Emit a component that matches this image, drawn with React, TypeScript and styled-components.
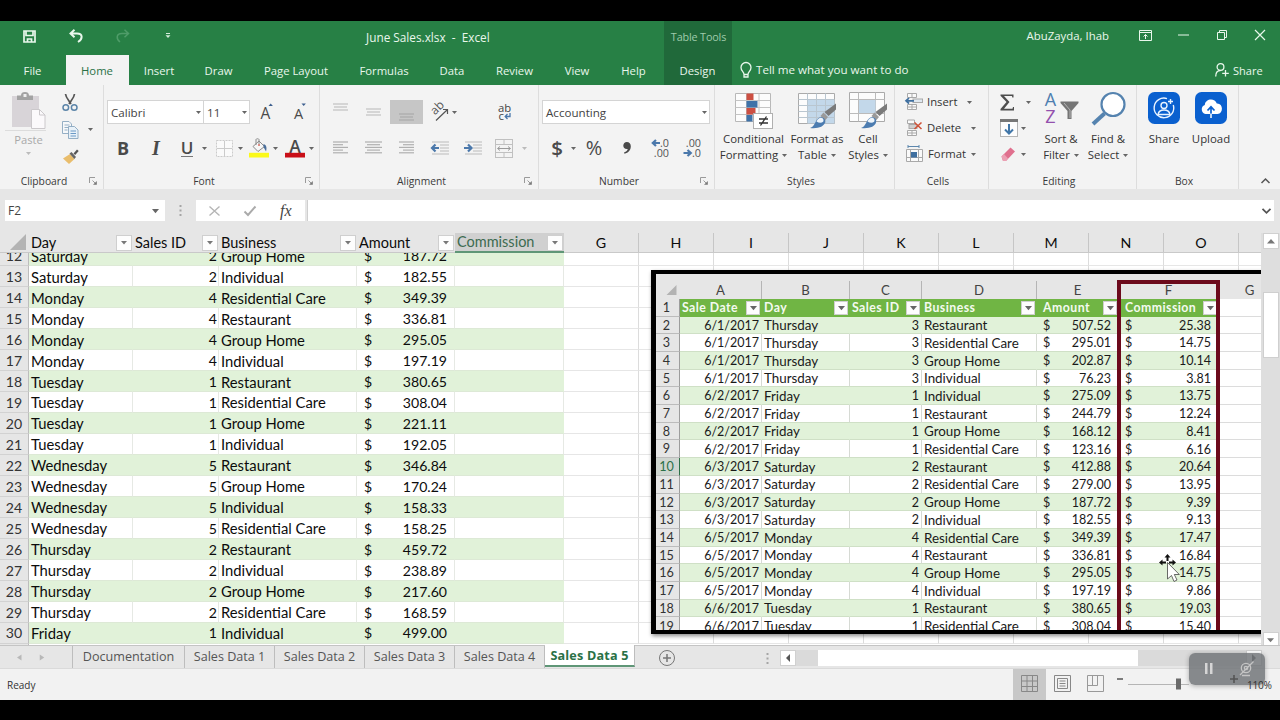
import React from 'react';
import styled, { createGlobalStyle, css } from 'styled-components';

const ui = `"Open Sans", "Noto Sans", sans-serif`;
const sheetFont = `Lato, "Open Sans", sans-serif`;

const Global = createGlobalStyle`
  * { box-sizing: border-box; }
  html, body { margin: 0; padding: 0; background: #000; overflow: hidden; }
  body { font-family: ${ui}; color: #262626; }
  svg { display: block; flex: none; overflow: visible; }
`;

/* ---------- window frame ---------- */
const Screen = styled.div`
  width: 1280px;
  height: 720px;
  padding: 21px 0 20px;
  background: #000;
  display: flex;
  flex-direction: column;
  overflow: hidden;
  white-space: nowrap;
  line-height: 1;
`;

const TitleBar = styled.header`
  height: 34px;
  flex: none;
  display: flex;
  background: #278045;
  color: #e9f7ec;
  font-size: 11.8px;
`;
const QuickAccess = styled.div`
  display: flex;
  align-items: center;
  width: 300px;
  padding: 0 0 4px 23px;
`;
const QuickIcon = styled.div<{ $w: number }>`
  width: ${p => p.$w}px;
`;
const DocTitle = styled.div`
  width: 364px;
  padding: 11px 0 0 66px;
  white-space: pre;
`;
const ContextTitle = styled.div`
  width: 68px;
  padding: 11px 0 0 1px;
  background: #20693a;
  color: #9fcbab;
  font-size: 10.8px;
  letter-spacing: -0.15px;
  text-align: center;
`;
const UserName = styled.div`
  width: 401px;
  padding: 9px 24px 0 0;
  text-align: right;
  font-size: 11.4px;
`;
const WindowIcons = styled.div`
  flex: 1;
  display: flex;
  align-items: center;
  padding: 0 0 6px 6px;
`;
const WindowIcon = styled.div<{ $w: number }>`
  width: ${p => p.$w}px;
`;

const TabBar = styled.nav`
  height: 30px;
  flex: none;
  display: flex;
  background: #278045;
  color: #e9f7ec;
  font-size: 11.3px;
`;
const RibbonTab = styled.div<{ $w: number; $kind?: 'active' | 'context' }>`
  width: ${p => p.$w}px;
  display: flex;
  align-items: center;
  justify-content: center;
  padding: 1px 1px 0 0;
  ${p => p.$kind === 'active' && css`background: #f3f3f3; color: #2a7146;`}
  ${p => p.$kind === 'context' && css`background: #20693a; margin-left: 2px;`}
`;
const TellMe = styled.div`
  display: flex;
  align-items: center;
  gap: 4px;
  width: 483px;
  padding-left: 8px;
  font-size: 11.6px;
`;
const ShareLink = styled.div`
  display: flex;
  align-items: center;
  gap: 4px;
  font-size: 11px;
`;

/* ---------- ribbon ---------- */
const Ribbon = styled.section`
  height: 104px;
  flex: none;
  display: flex;
  background: #f3f3f3;
`;
const Group = styled.div<{ $w: number }>`
  width: ${p => p.$w}px;
  flex: none;
  display: flex;
  flex-direction: column;
  border-right: 1px solid #dddddd;
`;
const GroupBody = styled.div<{ $row?: boolean }>`
  height: 89px;
  display: flex;
  flex-direction: ${p => (p.$row ? 'row' : 'column')};
`;
const GroupFooter = styled.div`
  height: 16px;
  display: flex;
  justify-content: flex-end;
  align-items: center;
  padding-right: 6px;
`;
const GroupName = styled.span`
  flex: 1;
  text-align: center;
  font-size: 10.3px;
  color: #3a3a3a;
  padding-right: 1px;
`;
const ToolRow = styled.div<{ $top: number; $left?: number }>`
  height: 24px;
  margin-top: ${p => p.$top}px;
  padding-left: ${p => p.$left ?? 0}px;
  display: flex;
  align-items: center;
`;
const Tool = styled.div<{ $w: number; $gap?: number; $on?: boolean }>`
  width: ${p => p.$w}px;
  height: 24px;
  flex: none;
  margin-left: ${p => p.$gap ?? 0}px;
  display: flex;
  align-items: center;
  justify-content: center;
  background: ${p => (p.$on ? '#c6c6c6' : 'transparent')};
`;
const Letter = styled.span<{ $size: number; $weight?: number; $italic?: boolean; $underline?: boolean }>`
  font-size: ${p => p.$size}px;
  font-weight: ${p => p.$weight ?? 400};
  color: #4a4a4a;
  ${p => p.$italic && css`font-family: "Liberation Serif", serif; font-style: italic;`}
  ${p => p.$underline && css`border-bottom: 1px solid #777; line-height: 15px; padding-bottom: 1px;`}
`;
const Combo = styled.div<{ $w: number }>`
  width: ${p => p.$w}px;
  height: 24px;
  flex: none;
  background: #fff;
  border: 1px solid #d4d4d4;
  margin-right: -1px;
  display: flex;
  align-items: center;
  justify-content: space-between;
  padding: 1px 2px 0 3px;
  font-size: 11.6px;
  color: #444;
`;
const PasteButton = styled.div`
  width: 57px;
  display: flex;
  flex-direction: column;
  align-items: center;
  padding-top: 7px;
  font-size: 11.2px;
  color: #a9a9a9;
  gap: 3px;
`;
const PasteCaret = styled.div`
  padding-top: 4px;
`;
const ClipTools = styled.div`
  display: flex;
  flex-direction: column;
  padding: 4px 0 0 5px;
`;
const ClipTool = styled.div`
  display: flex;
  align-items: center;
  gap: 9px;
  height: 27px;
`;
const BigButton = styled.div<{ $w: number }>`
  width: ${p => p.$w}px;
  flex: none;
  display: flex;
  flex-direction: column;
  align-items: center;
  padding-top: 7px;
  font-size: 11.4px;
  color: #333;
`;
const BigIcon = styled.div`
  height: 39px;
`;
const ButtonLine = styled.div`
  height: 16px;
  display: flex;
  align-items: center;
  gap: 4px;
`;
const SmallButton = styled.div<{ $gap: number }>`
  height: 26px;
  display: flex;
  align-items: center;
  gap: ${p => p.$gap}px;
  font-size: 11.3px;
  color: #333;
`;
const SmallLabel = styled.span<{ $pull: number }>`
  margin-left: -${p => p.$pull}px;
`;
const SmallStack = styled.div<{ $left: number; $top: number; $w?: number }>`
  padding: ${p => p.$top}px 0 0 ${p => p.$left}px;
  width: ${p => (p.$w ? p.$w + 'px' : 'auto')};
  flex: none;
`;
const RibbonEnd = styled.div`
  flex: 1;
  display: flex;
  align-items: flex-end;
  justify-content: center;
  padding: 0 0 5px 11px;
`;

/* ---------- formula bar ---------- */
const FormulaBar = styled.section`
  height: 44px;
  flex: none;
  display: flex;
  padding: 11px 6px 0 5px;
  background: #e6e6e6;
  align-items: flex-start;
`;
const NameBox = styled.div`
  width: 160px;
  height: 21px;
  background: #fff;
  display: flex;
  align-items: center;
  justify-content: space-between;
  padding: 1px 6px 0 3px;
  font-size: 12px;
  color: #444;
`;
const BarDots = styled.div`
  width: 31px;
  height: 21px;
  display: flex;
  align-items: center;
  justify-content: center;
`;
const FormulaTools = styled.div`
  width: 109px;
  height: 21px;
  background: #fff;
  display: flex;
  align-items: center;
  gap: 24px;
  padding-left: 13px;
`;
const FxLabel = styled.span`
  font: italic 16px "Liberation Serif", serif;
  color: #444;
`;
const FormulaInput = styled.div`
  flex: 1;
  height: 21px;
  margin-left: 2px;
  background: #fff;
  border-left: 1px solid #cfcfcf;
  display: flex;
  align-items: center;
  justify-content: flex-end;
  padding-right: 3px;
`;

/* ---------- worksheet ---------- */
const Workspace = styled.main`
  height: 412px;
  flex: none;
  display: flex;
  background: #fff;
`;
const Sheet = styled.div`
  position: relative;
  width: 1261px;
  height: 412px;
  overflow: hidden;
  font-family: ${sheetFont};
  font-size: 14.8px;
  color: #0c0c0c;
`;
const HeaderRow = styled.div`
  display: flex;
  height: 20px;
  background: #e6e6e6;
  border-bottom: 1px solid #c9c9c9;
`;
const Corner = styled.div<{ $w: number; $pad: string }>`
  width: ${p => p.$w}px;
  flex: none;
  padding: ${p => p.$pad};
  display: flex;
  align-items: flex-end;
  justify-content: flex-end;
`;
const FieldHeader = styled.div<{ $w: number; $selected?: boolean }>`
  width: ${p => p.$w}px;
  flex: none;
  display: flex;
  align-items: center;
  justify-content: space-between;
  padding: 1px 1px 0 2px;
  font-size: 14.5px;
  ${p => p.$selected && css`background: #d0d0d0; color: #3d6b50; border-bottom: 2px solid #5f9677; margin-bottom: -1px;`}
`;
const LetterHeader = styled.div<{ $w: number }>`
  width: ${p => p.$w}px;
  flex: none;
  display: flex;
  align-items: center;
  justify-content: center;
  padding-top: 1px;
  border-right: 1px solid #c6c6c6;
  font-size: 14.2px;
`;
const FilterButton = styled.div<{ $size: number }>`
  width: ${p => p.$size}px;
  height: ${p => p.$size}px;
  flex: none;
  background: #fdfdfd;
  border: 1px solid #cfcfcf;
  display: flex;
  align-items: center;
  justify-content: center;
`;
const Rows = styled.div`
  height: 392px;
  overflow: hidden;
`;
const RowStack = styled.div`
  margin-top: -7.9px;
`;
const Row = styled.div`
  display: flex;
  height: 20.97px;
`;
const RowNumber = styled.div`
  width: 29px;
  flex: none;
  background: #e6e6e6;
  border-right: 1px solid #bdbdbd;
  border-bottom: 1px solid #d2d2d2;
  display: flex;
  align-items: center;
  justify-content: center;
  padding-top: 2px;
  font-size: 14.1px;
  color: #333;
`;
const Cell = styled.div<{ $w: number; $band?: boolean; $right?: boolean; $money?: boolean }>`
  width: ${p => p.$w}px;
  flex: none;
  display: flex;
  align-items: center;
  justify-content: ${p => (p.$money ? 'space-between' : p.$right ? 'flex-end' : 'flex-start')};
  padding: ${p => (p.$money ? '2px 7px 0' : p.$right ? '2px 1px 0 2px' : '2px 2px 0')};
  font-size: ${p => (p.$money || p.$right ? 14.1 : 14.8)}px;
  background: ${p => (p.$band ? '#e1f2d9' : '#fff')};
  border-right: 1px solid ${p => (p.$band ? '#e1f2d9' : '#e6e9e4')};
  border-bottom: 1px solid #dde9d6;
`;
const BlankCell = styled.div<{ $w: number }>`
  width: ${p => p.$w}px;
  flex: none;
  border-right: 1px solid #dcdcdc;
  border-bottom: 1px solid #e6e6e6;
`;

/* ---------- picture pasted over the sheet ---------- */
const Picture = styled.div`
  position: absolute;
  left: 651px;
  top: 37px;
  width: 620px;
  height: 364px;
  border: 4px solid #000;
  border-left-width: 5px;
  box-shadow: 1px 2px 4px rgba(0, 0, 0, 0.45);
  background: #fff;
  overflow: hidden;
  font-size: 13.4px;
  color: #1a1a1a;
`;
const PicHeader = styled.div`
  display: flex;
  height: 24.8px;
  background: #e6e6e6;
  font-size: 13.2px;
  color: #444;
`;
const PicLetter = styled.div<{ $w: number }>`
  width: ${p => p.$w}px;
  flex: none;
  margin-top: 7px;
  padding-top: 1px;
  display: flex;
  align-items: center;
  justify-content: center;
  border-right: 1px solid #b5b5b5;
`;
const PicRow = styled.div`
  display: flex;
  height: 17.71px;
`;
const PicNumber = styled.div<{ $on?: boolean }>`
  width: 24px;
  flex: none;
  background: ${p => (p.$on ? '#cfd6d0' : '#e6e6e6')};
  color: ${p => (p.$on ? '#2c7048' : '#333')};
  border-right: 1px solid ${p => (p.$on ? '#2c7048' : '#9d9d9d')};
  border-bottom: 1px solid #bcbcbc;
  display: flex;
  align-items: center;
  justify-content: center;
  padding: 2px 2px 0 0;
  font-size: 12.6px;
`;
const PicField = styled.div<{ $w: number; $indent: number }>`
  width: ${p => p.$w}px;
  flex: none;
  background: #70b544;
  color: #f4faf0;
  font-weight: 700;
  font-size: 12.3px;
  letter-spacing: 0.45px;
  display: flex;
  align-items: center;
  justify-content: space-between;
  padding: 0 2px 0 ${p => p.$indent}px;
`;
const PicCell = styled.div<{ $w: number; $band?: boolean; $right?: boolean; $money?: boolean }>`
  width: ${p => p.$w}px;
  flex: none;
  display: flex;
  align-items: center;
  justify-content: ${p => (p.$money ? 'space-between' : p.$right ? 'flex-end' : 'flex-start')};
  padding: ${p => (p.$money ? '2px 7px 0 6px' : '2px 2px 0')};
  font-size: ${p => (p.$money || p.$right ? 12.5 : 13.4)}px;
  background: ${p => (p.$band ? '#e1f2d9' : '#fff')};
  border-right: 1px solid ${p => (p.$band ? '#e1f2d9' : '#d6dad4')};
  border-bottom: 1px solid #cfe0c6;
`;
const PicBlank = styled.div`
  width: 60px;
  flex: none;
  border-bottom: 1px solid #dcdcdc;
`;
const RedFrame = styled.div`
  position: absolute;
  left: 461px;
  top: 6px;
  width: 103px;
  height: 360px;
  border: 4px solid #6c0a1c;
`;
const Pointer = styled.div`
  position: absolute;
  left: 1159px;
  top: 321px;
`;

const VScroll = styled.div`
  flex: 1;
  display: flex;
  flex-direction: column;
  align-items: center;
  background: #dedede;
`;
const ScrollButton = styled.div`
  width: 16px;
  height: 16px;
  flex: none;
  background: #fff;
  border: 1px solid #d0d0d0;
  display: flex;
  align-items: center;
  justify-content: center;
`;
const VThumb = styled.div`
  width: 16px;
  height: 66px;
  margin: 43px 0 274px;
  flex: none;
  background: #fff;
  border: 1px solid #cfcfcf;
`;

/* ---------- sheet tabs and status ---------- */
const SheetBar = styled.footer`
  height: 24px;
  flex: none;
  display: flex;
  background: #e6e6e6;
  border-top: 1px solid #c4c4c4;
  border-bottom: 1px solid #dadada;
  font-size: 12.6px;
  color: #555;
`;
const TabArrows = styled.div`
  width: 73px;
  display: flex;
  align-items: center;
  padding-left: 17px;
  gap: 16px;
  border-right: 1px solid #bdbdbd;
`;
const SheetTab = styled.div<{ $w: number; $active?: boolean }>`
  width: ${p => p.$w}px;
  height: 22px;
  flex: none;
  display: flex;
  align-items: center;
  justify-content: center;
  border-right: 1px solid #bdbdbd;
  padding-top: 1px;
  ${p => p.$active && css`
    background: #fff;
    color: #2a7146;
    font-weight: 700;
    letter-spacing: 0.2px;
    border-bottom: 2px solid #5f9677;
    padding-top: 2px;
    margin-top: -1px;
  `}
`;
const AddSheet = styled.div`
  width: 120px;
  padding: 4px 0 0 24px;
`;
const TabSplitter = styled.div`
  width: 25px;
  padding: 6px 0 0 11px;
`;
const HScroll = styled.div`
  width: 482px;
  height: 16px;
  margin: 4px 0 0 0;
  display: flex;
  background: #dadada;
`;
const HThumb = styled.div`
  width: 320px;
  margin: 0 108px 0 22px;
  flex: none;
  background: #fff;
`;
const StatusBar = styled.div`
  position: relative;
  height: 31px;
  flex: none;
  display: flex;
  background: #f2f2f2;
  font-size: 10px;
  color: #333;
`;
const StatusText = styled.div`
  width: 1013px;
  padding: 11px 0 0 7px;
`;
const ViewButton = styled.div<{ $on?: boolean }>`
  width: 33px;
  height: 31px;
  padding-bottom: 2px;
  display: flex;
  align-items: center;
  justify-content: center;
  background: ${p => (p.$on ? '#c8c8c8' : 'transparent')};
`;
const Zoom = styled.div`
  position: relative;
  z-index: 1;
  margin-left: 5px;
  padding-top: 7px;
  width: 130px;
`;
const ZoomValue = styled.div`
  position: relative;
  z-index: 1;
  padding-top: 11px;
  font-size: 10.2px;
  letter-spacing: -0.3px;
`;
const RecorderPill = styled.div`
  position: absolute;
  left: 1189px;
  top: -16px;
  width: 76px;
  height: 32px;
  border-radius: 6px;
  background: rgba(112, 115, 119, 0.83);
  box-shadow: 0 1px 5px rgba(0, 0, 0, 0.3);
  display: flex;
  align-items: center;
  gap: 25px;
  padding-left: 15px;
`;

/* ---------- icons ---------- */
const Caret = ({ c = '#666', s = 5 }: { c?: string; s?: number }) => (
  <svg width={s} height={s * 0.6} viewBox="0 0 10 6"><path d="M0 0h10L5 6z" fill={c} /></svg>
);
const Tri = ({ d, c = '#555', w = 8, h = 8 }: { d: string; c?: string; w?: number; h?: number }) => (
  <svg width={w} height={h} viewBox="0 0 8 8"><path d={d} fill={c} /></svg>
);
const Launcher = () => (
  <svg width="8" height="8" viewBox="0 0 8 8" fill="none" stroke="#9a9a9a">
    <path d="M.5 6V.5H6M3.500 3.500l3 3" /><path d="M7.800 4v3.800H4z" fill="#777" stroke="none" />
  </svg>
);
const Dots = () => (
  <svg width="3" height="13" viewBox="0 0 3 13" fill="#a5a5a5">
    <rect x=".5" y="1" width="2" height="2" /><rect x=".5" y="5.5" width="2" height="2" /><rect x=".5" y="10" width="2" height="2" />
  </svg>
);
const Lines = ({ dx, n = 5, c = '#b0b0b0' }: { dx: number[][]; n?: number; c?: string }) => (
  <svg width="17" height={n * 2.7} viewBox={`0 0 17 ${n * 2.7}`} stroke={c} strokeWidth="1.2">
    {Array.from({ length: n }, (_, i) => {
      const [a, b] = dx[i % dx.length];
      return <path key={i} d={`M${a} ${i * 2.7 + 1}H${b}`} />;
    })}
  </svg>
);
const IndentIcon = ({ flip }: { flip?: boolean }) => (
  <svg width="18" height="14" viewBox="0 0 18 14" fill="none">
    <path d="M1 1h17M9 4h9M9 7h9M9 10h9M1 13h17" stroke="#bcbcbc" strokeWidth="1.2" />
    <path d={flip ? 'M0 7h7M4 3.5 7.5 7 4 10.5' : 'M8 7H1.5M4.5 3.5 1 7l3.5 3.5'} stroke="#4b78ab" strokeWidth="2.2" />
  </svg>
);
const PasteIcon = () => (
  <svg width="35" height="39" viewBox="0 0 35 39">
    <rect x="1" y="4" width="27" height="31" fill="#d8d4d8" />
    <path d="M6 8V3.5h4C10 1 11.500 0 14 0s4 1 4 3.500h4V8z" fill="#a3a3a3" />
    <rect x="12.500" y="2" width="3" height="3" fill="#efefef" />
    <path d="M20.500 17.500h8l5.500 5.500v13.500H20.500z" fill="#fbf9fb" stroke="#cbc8cb" />
    <path d="M28.500 17.500V23H34" fill="none" stroke="#cbc8cb" />
    <path d="M-6 38.500H35" stroke="#dcdcdc" />
  </svg>
);
const CutIcon = () => (
  <svg width="16" height="18" viewBox="0 0 16 18" fill="none">
    <path d="M3.500 0c.5 4 3 6 5.500 10M12.500 0c-.5 4-3 6-5.500 10" stroke="#555" strokeWidth="1.700" />
    <circle cx="3.800" cy="13.500" r="2.800" stroke="#5b84a8" strokeWidth="1.500" />
    <circle cx="12.200" cy="13.500" r="2.800" stroke="#5b84a8" strokeWidth="1.500" />
  </svg>
);
const CopyIcon = () => (
  <svg width="17" height="18" viewBox="0 0 17 18" stroke="#8aa7bf" strokeWidth=".9">
    <path d="M.5.5H7L9.500 3v9.500h-9z" fill="#f6f8fa" />
    <path d="M2.500 4h5M2.500 6.500h5M2.500 9h3" />
    <path d="M6.500 5.500h6l3.500 3.500v8.500H6.500z" fill="#e8f1f8" />
    <path d="M8.500 10h5.500M8.500 12.500h5.500M8.500 15h5.500" stroke="#5b8fc0" />
  </svg>
);
const BrushIcon = () => (
  <svg width="17" height="16" viewBox="0 0 17 16">
    <path d="M1 9.500 8 5l4.500 5L7 15z" fill="#e9bd6c" />
    <path d="M7.500 4.500 9.500 3l4.500 5-1.700 2z" fill="#666" />
    <path d="M11.500 4.500 15 .5l1.700 1.500-3.500 4z" fill="#555" />
  </svg>
);
const BordersIcon = () => (
  <svg width="17" height="17" viewBox="0 0 17 17" fill="#fafafa" stroke="#cbcbcb">
    <rect x=".5" y=".5" width="16" height="16" strokeDasharray="2 1" /><path d="M8.500 1v15M1 8.500h15" />
  </svg>
);
const FillIcon = () => (
  <svg width="20" height="20" viewBox="0 0 20 20" fill="none">
    <path d="M4 8.500 10 3l5.500 5.500-6.500 5z" fill="#f7f7f7" stroke="#8a8a8a" />
    <path d="M7 7V1.500c0-1 3-1 3 0V6" stroke="#8a8a8a" />
    <circle cx="10" cy="7" r="1" fill="#d46a5f" />
    <path d="M14.500 6c3 1 3.500 3.500 2.500 7.500L14.500 9z" fill="#4b6f9b" />
    <rect y="14.800" width="20" height="4.700" fill="#fbf91a" />
  </svg>
);
const FontColorIcon = () => (
  <svg width="20" height="20" viewBox="0 0 20 20">
    <text x="10" y="14.500" fontSize="17.500" fontWeight="600" fontFamily={ui} textAnchor="middle" fill="#4a4a4a">A</text>
    <rect y="14.800" width="20" height="4.700" fill="#c90f18" />
  </svg>
);
const SizeA = ({ up }: { up?: boolean }) => (
  <svg width="15" height="20" viewBox="0 0 15 20">
    <text x="5.500" y="16.500" fontSize={up ? 15.5 : 14.500} fontFamily={ui} textAnchor="middle" fill="#4a4a4a">A</text>
    <path d={up ? 'M8.500 4 10.700 1.500l2.200 2.500z' : 'M8.500 1.500h4.400l-2.200 2.500z'} fill="#3d5f8f" />
  </svg>
);
const OrientationIcon = () => (
  <svg width="20" height="20" viewBox="0 0 20 20" fill="none">
    <text transform="translate(5 13.500) rotate(-45)" fontSize="12" fontFamily={ui} fill="#555">ab</text>
    <path d="M6 18.500 17 8M13 7.500h4.500V12" stroke="#555" strokeWidth="1.200" />
  </svg>
);
const WrapIcon = () => (
  <svg width="16" height="20" viewBox="0 0 16 20" fill="none">
    <text x="1" y="9.500" fontSize="11.300" fontFamily={ui} fill="#444">ab</text>
    <text x="1.500" y="18" fontSize="11.300" fontFamily={ui} fill="#444">c</text>
    <path d="M13 11v3.500H8.500M10.500 12l-2.300 2.500L10.500 17" stroke="#4b78ab" strokeWidth="1.300" />
  </svg>
);
const MergeIcon = () => (
  <svg width="18" height="19" viewBox="0 0 18 19" fill="none" stroke="#c0c0c0">
    <rect x=".5" y=".5" width="17" height="18" /><path d="M.5 5.500h17M.5 13.500h17M9 .5v5M9 13.500v5" />
    <path d="M3 9.500h12M5 7.500l-2.500 2L5 11.500M13 7.500l2.500 2-2.500 2" stroke="#9a9a9a" />
  </svg>
);
const DecimalIcon = ({ dec }: { dec?: boolean }) => (
  <svg width="18" height="20" viewBox="0 0 18 20" fontFamily={ui} fontSize="10.800" fill="#555">
    <text x="17" y="9" textAnchor="end">{dec ? '.00' : '.0'}</text>
    <text x="17" y="19" textAnchor="end">{dec ? '.0' : '.00'}</text>
    <path d={dec ? 'M-.5 15h7M3.500 12l3.300 3-3.300 3' : 'M8 5H1M4 2 .8 5 4 8'} fill="none" stroke="#4b78ab" strokeWidth="2.200" />
  </svg>
);
const CommaIcon = () => (
  <svg width="8" height="12" viewBox="0 0 8 12">
    <path d="M3.800 0C6.300 0 7.800 1.700 7.800 4.200 7.800 8 5.500 10.700 1.500 11.800L1 10.500C3.300 9.600 4.600 8.300 4.700 7 2 7.400.3 6 .3 3.600.3 1.500 1.800 0 3.800 0z" fill="#4a4a4a" />
  </svg>
);
const Brush = () => (
  <>
    <path d="M38 11.500V17.500L30.500 24l-4-4z" fill="#7a7a7a" />
    <path d="m25.500 20.500 4.500 4.500-3 3.500-4.500-4.500z" fill="#9a9a9a" />
    <path d="M12 36c5-1 5-8.500 9.500-10.500 3.500-1 6.500 1.500 5.500 5-1 4-7 6.500-15 5.500z" fill="#4c7cb0" />
    <path d="M18.500 29.500c2-5 6.500-4.500 7-1.500s-4 3.500-7 1.500z" fill="#eef5fb" />
  </>
);
const CondIcon = () => (
  <svg width="38" height="38" viewBox="0 0 38 38">
    <path d="M.5 1.500h35v28H.5z" fill="#fcfcfc" stroke="#b8b8b8" />
    <path d="M.5 8.500h35M.5 15.500h35M.5 22.500h35M11.500 1.500v28M24 1.500v28" stroke="#c4c4c4" />
    <path d="M11.500 1.500h7V8h-7zM11.500 16h9v6.500h-9z" fill="#cc4f42" />
    <path d="M11.500 9h11v6.500h-11zM11.500 23h6v6.500h-6z" fill="#3f72a8" />
    <rect x="18.500" y="21.500" width="19" height="15" fill="#fff" stroke="#b0b0b0" />
    <path d="M24 27h9M24 31h9M31.500 24.500l-6 9" stroke="#333" strokeWidth="1.300" />
  </svg>
);
const TableIcon = () => (
  <svg width="39" height="38" viewBox="0 0 39 38">
    <path d="M.5 1.500h36v30H.5z" fill="#fcfcfc" stroke="#aaa" />
    <path d="M10 8h26.500v23.500H10z" fill="#c3d8ea" />
    <path d="M.5 7.500h36M.5 13.500h36M.5 19.500h36M.5 25.500h36M9.500 1.500v30M18.500 1.500v30M27.500 1.500v30" stroke="#b9c6d0" />
    <Brush />
  </svg>
);
const CellIcon = () => (
  <svg width="38" height="38" viewBox="0 0 38 38">
    <path d="M.5.500h35v29H.5z" fill="#fcfcfc" stroke="#aaa" />
    <path d="M.5 7.500h35M.5 21.500h35M9.500.500v29M26.500.500v29" stroke="#bbb" />
    <path d="M10 8h16.500v13H10z" fill="#c3d8ea" />
    <Brush />
  </svg>
);
const InsertIcon = () => (
  <svg width="18" height="18" viewBox="0 0 18 18" fill="#fafafa" stroke="#a9a9a9">
    <path d="M2.500.500h9v4h-9zM2.500 11.500h9v5h-9zM7 .5v4M7 11.500v5M2.500 14h9" />
    <rect x="8" y="6" width="9.500" height="3.500" fill="#dfe8f0" />
    <path d="M9 7.800H1M4 5 1 7.800l3 2.700" fill="none" stroke="#3f6f9f" strokeWidth="1.700" />
  </svg>
);
const DeleteIcon = () => (
  <svg width="18" height="18" viewBox="0 0 18 18" fill="#fafafa" stroke="#a9a9a9">
    <path d="M2.500 1h7v3.500h-7zM2.500 11.500h9v5h-9zM7 11.500v5M2.500 14h9" />
    <rect x="4" y="5.500" width="8" height="4" fill="#cfcfcf" />
    <path d="m9.500 3.500 7 6.500M16.500 3.500l-7 6.500" stroke="#cf5238" strokeWidth="1.600" />
  </svg>
);
const FormatIcon = () => (
  <svg width="18" height="18" viewBox="0 0 18 18" fill="none" stroke="#a9a9a9">
    <path d="M1.500 4.500h16v12h-16zM1.500 12.500h16M5.500 4.500v12M13.500 4.500v12" fill="#fafafa" />
    <rect x="6" y="7" width="6" height="5.500" fill="#3f6f9f" stroke="none" />
    <path d="M3 1.500h11M3 0v3M14 0v3" stroke="#5d87ad" />
  </svg>
);
const SumIcon = () => (
  <svg width="15" height="17" viewBox="0 0 15 17"><path d="M.5.500h13v3h-1.200L12 2H4l5.500 6L4 14.800h8.500l.5-1.800H14v3.500H.5V15l6-7L.5 1.800z" fill="#4d4d4d" /></svg>
);
const FillDownIcon = () => (
  <svg width="18" height="18" viewBox="0 0 18 18">
    <rect x=".5" y=".5" width="17" height="17" fill="#fdfdfd" stroke="#b5b5b5" /><rect width="18" height="3" fill="#777" />
    <path d="M9 5v9.500M5 10.500l4 4 4-4" fill="none" stroke="#4176a8" strokeWidth="2" />
  </svg>
);
const EraserIcon = () => (
  <svg width="16" height="15" viewBox="0 0 16 15">
    <path d="M1.500 9.500 10.500.500l4.500 4-9 9.500H3z" fill="#e0708e" /><path d="M1.500 9.500 4 7l4 4.500-2 2.500H3z" fill="#eba0b3" />
  </svg>
);
const SortIcon = () => (
  <svg width="35" height="34" viewBox="0 0 35 34">
    <text x="6.500" y="14" fontSize="18" fontFamily={ui} textAnchor="middle" fill="#4e7eb0">A</text>
    <text x="6.500" y="31" fontSize="18" fontFamily={ui} textAnchor="middle" fill="#9350ad">Z</text>
    <path d="M16.500 9.500h18v1.500l-7 8V27h-4v-8l-7-8z" fill="#757575" />
    <path d="m20 11 6 7V26" fill="none" stroke="#b5b5b5" />
  </svg>
);
const FindIcon = () => (
  <svg width="35" height="34" viewBox="0 0 35 34" fill="none">
    <circle cx="22" cy="12.500" r="11.500" fill="#fff" stroke="#5583af" strokeWidth="2.200" />
    <path d="M13.500 21.500 2 32" stroke="#5583af" strokeWidth="4" />
  </svg>
);
const BoxShareIcon = () => (
  <svg width="32" height="32" viewBox="0 0 32 32" fill="none" stroke="#e9f3ff" strokeWidth="1.400">
    <rect width="32" height="32" rx="6.500" fill="#0a60cf" stroke="none" />
    <path d="M19 6.600A9.800 9.800 0 1 0 25.300 13" /><circle cx="16" cy="13.500" r="3" />
    <path d="M10 22.500c1-6 11-6 12 0zM22.500 7v5M20 9.500h5" />
  </svg>
);
const BoxUploadIcon = () => (
  <svg width="32" height="32" viewBox="0 0 32 32">
    <rect width="32" height="32" rx="6.500" fill="#0a60cf" />
    <path d="M10.500 22A4.700 4.700 0 0 1 9.800 13c.5-6.500 10-7.500 12-1.500 6.500-.5 7 10 .7 10.500z" fill="#fff" />
    <path d="M16 22V15M12.500 18.500 16 14.800l3.500 3.700" fill="none" stroke="#0a60cf" strokeWidth="1.700" />
    <path d="M16 21.500V26" stroke="#fff" strokeWidth="1.500" />
  </svg>
);

/* ---------- data ---------- */
const tabs: [string, number, ('active' | 'context')?][] = [
  ['File', 66], ['Home', 63, 'active'], ['Insert', 61], ['Draw', 58], ['Page Layout', 97], ['Formulas', 79],
  ['Data', 57], ['Review', 68], ['View', 57], ['Help', 56], ['Design', 68, 'context'],
];
const mainRows: [number, string, number, string, string][] = [
  [12, 'Saturday', 2, 'Group Home', '187.72'], [13, 'Saturday', 2, 'Individual', '182.55'],
  [14, 'Monday', 4, 'Residential Care', '349.39'], [15, 'Monday', 4, 'Restaurant', '336.81'],
  [16, 'Monday', 4, 'Group Home', '295.05'], [17, 'Monday', 4, 'Individual', '197.19'],
  [18, 'Tuesday', 1, 'Restaurant', '380.65'], [19, 'Tuesday', 1, 'Residential Care', '308.04'],
  [20, 'Tuesday', 1, 'Group Home', '221.11'], [21, 'Tuesday', 1, 'Individual', '192.05'],
  [22, 'Wednesday', 5, 'Restaurant', '346.84'], [23, 'Wednesday', 5, 'Group Home', '170.24'],
  [24, 'Wednesday', 5, 'Individual', '158.33'], [25, 'Wednesday', 5, 'Residential Care', '158.25'],
  [26, 'Thursday', 2, 'Restaurant', '459.72'], [27, 'Thursday', 2, 'Individual', '238.89'],
  [28, 'Thursday', 2, 'Group Home', '217.60'], [29, 'Thursday', 2, 'Residential Care', '168.59'],
  [30, 'Friday', 1, 'Individual', '499.00'],
];
const picRows: [string, string, number, string, string, string][] = [
  ['6/1/2017', 'Thursday', 3, 'Restaurant', '507.52', '25.38'],
  ['6/1/2017', 'Thursday', 3, 'Residential Care', '295.01', '14.75'],
  ['6/1/2017', 'Thursday', 3, 'Group Home', '202.87', '10.14'],
  ['6/1/2017', 'Thursday', 3, 'Individual', '76.23', '3.81'],
  ['6/2/2017', 'Friday', 1, 'Individual', '275.09', '13.75'],
  ['6/2/2017', 'Friday', 1, 'Restaurant', '244.79', '12.24'],
  ['6/2/2017', 'Friday', 1, 'Group Home', '168.12', '8.41'],
  ['6/2/2017', 'Friday', 1, 'Residential Care', '123.16', '6.16'],
  ['6/3/2017', 'Saturday', 2, 'Restaurant', '412.88', '20.64'],
  ['6/3/2017', 'Saturday', 2, 'Residential Care', '279.00', '13.95'],
  ['6/3/2017', 'Saturday', 2, 'Group Home', '187.72', '9.39'],
  ['6/3/2017', 'Saturday', 2, 'Individual', '182.55', '9.13'],
  ['6/5/2017', 'Monday', 4, 'Residential Care', '349.39', '17.47'],
  ['6/5/2017', 'Monday', 4, 'Restaurant', '336.81', '16.84'],
  ['6/5/2017', 'Monday', 4, 'Group Home', '295.05', '14.75'],
  ['6/5/2017', 'Monday', 4, 'Individual', '197.19', '9.86'],
  ['6/6/2017', 'Tuesday', 1, 'Restaurant', '380.65', '19.03'],
  ['6/6/2017', 'Tuesday', 1, 'Residential Care', '308.04', '15.40'],
];
const fields: [string, number][] = [['Day', 104], ['Sales ID', 86], ['Business', 138], ['Amount', 98], ['Commission', 109]];
const letters = ['G', 'H', 'I', 'J', 'K', 'L', 'M', 'N', 'O'];
const picCols: [string, string, number, number][] = [
  ['A', 'Sale Date', 82, 2], ['B', 'Day', 88, 2], ['C', 'Sales ID', 72, 2],
  ['D', 'Business', 115, 2], ['E', 'Amount', 82, 6], ['F', 'Commission', 100, 6],
];

const GroupEnd = ({ name, launcher = true }: { name: string; launcher?: boolean }) => (
  <GroupFooter><GroupName>{name}</GroupName>{launcher && <Launcher />}</GroupFooter>
);

const RibbonPanel = () => (
  <Ribbon>
    <Group $w={104}>
      <GroupBody $row>
        <PasteButton><PasteIcon /><span>Paste</span><PasteCaret><Caret c="#bbb" /></PasteCaret></PasteButton>
        <ClipTools>
          <ClipTool><CutIcon /></ClipTool>
          <ClipTool><CopyIcon /><Caret /></ClipTool>
          <ClipTool><BrushIcon /></ClipTool>
        </ClipTools>
      </GroupBody>
      <GroupEnd name="Clipboard" />
    </Group>

    <Group $w={216}>
      <GroupBody>
        <ToolRow $top={15} $left={3}>
          <Combo $w={97}>Calibri<Caret /></Combo>
          <Combo $w={47}>11<Caret /></Combo>
          <Tool $w={33} $gap={2}><SizeA up /></Tool>
          <Tool $w={33}><SizeA /></Tool>
        </ToolRow>
        <ToolRow $top={12} $left={3}>
          <Tool $w={32}><Letter $size={18} $weight={700}>B</Letter></Tool>
          <Tool $w={34}><Letter $size={20} $weight={700} $italic>I</Letter></Tool>
          <Tool $w={28}><Letter $size={17} $weight={600} $underline>U</Letter></Tool>
          <Tool $w={7}><Caret /></Tool>
          <Tool $w={24} $gap={4}><BordersIcon /></Tool>
          <Tool $w={8}><Caret /></Tool>
          <Tool $w={24} $gap={3}><FillIcon /></Tool>
          <Tool $w={8}><Caret /></Tool>
          <Tool $w={24} $gap={4}><FontColorIcon /></Tool>
          <Tool $w={8}><Caret /></Tool>
        </ToolRow>
      </GroupBody>
      <GroupEnd name="Font" />
    </Group>

    <Group $w={219}>
      <GroupBody>
        <ToolRow $top={15} $left={4}>
          <Tool $w={33}><svg width="17" height="18" viewBox="0 0 17 18" stroke="#b8b8b8" strokeWidth="1.2"><path d="M1 1h15M2 4h13M1 7h15" /></svg></Tool>
          <Tool $w={33}><svg width="17" height="18" viewBox="0 0 17 18" stroke="#b8b8b8" strokeWidth="1.2"><path d="M1 6h15M2 9h13M1 12h15" /></svg></Tool>
          <Tool $w={33} $on><svg width="17" height="18" viewBox="0 0 17 18" stroke="#a4a4a4" strokeWidth="1.2"><path d="M1 11h15M2 14h13M1 17h15" /></svg></Tool>
          <Tool $w={22} $gap={6}><OrientationIcon /></Tool>
          <Tool $w={7}><Caret /></Tool>
          <Tool $w={22} $gap={36}><WrapIcon /></Tool>
        </ToolRow>
        <ToolRow $top={12} $left={4}>
          <Tool $w={33}><Lines dx={[[1, 16], [1, 11]]} /></Tool>
          <Tool $w={33}><Lines dx={[[0, 17], [2, 15]]} /></Tool>
          <Tool $w={33}><Lines dx={[[1, 16], [5, 16]]} /></Tool>
          <Tool $w={33}><IndentIcon /></Tool>
          <Tool $w={33}><IndentIcon flip /></Tool>
          <Tool $w={29}><MergeIcon /></Tool>
          <Tool $w={7} $gap={3}><Caret c="#bbb" /></Tool>
        </ToolRow>
      </GroupBody>
      <GroupEnd name="Alignment" />
    </Group>

    <Group $w={176}>
      <GroupBody>
        <ToolRow $top={15} $left={3}><Combo $w={168}>Accounting<Caret /></Combo></ToolRow>
        <ToolRow $top={12} $left={5}>
          <Tool $w={26}><Letter $size={20.5} $weight={600}>$</Letter></Tool>
          <Tool $w={7}><Caret /></Tool>
          <Tool $w={28} $gap={3}><Letter $size={20}>%</Letter></Tool>
          <Tool $w={32} $gap={3}><CommaIcon /></Tool>
          <Tool $w={32} $gap={2}><DecimalIcon /></Tool>
          <Tool $w={32}><DecimalIcon dec /></Tool>
        </ToolRow>
      </GroupBody>
      <GroupEnd name="Number" />
    </Group>

    <Group $w={180}>
      <GroupBody $row>
        <BigButton $w={77}>
          <BigIcon><CondIcon /></BigIcon>
          <ButtonLine>Conditional</ButtonLine><ButtonLine>Formatting<Caret /></ButtonLine>
        </BigButton>
        <BigButton $w={50}>
          <BigIcon><TableIcon /></BigIcon>
          <ButtonLine>Format as</ButtonLine><ButtonLine>Table<Caret /></ButtonLine>
        </BigButton>
        <BigButton $w={52}>
          <BigIcon><CellIcon /></BigIcon>
          <ButtonLine>Cell</ButtonLine><ButtonLine>Styles<Caret /></ButtonLine>
        </BigButton>
      </GroupBody>
      <GroupEnd name="Styles" launcher={false} />
    </Group>

    <Group $w={94}>
      <GroupBody>
        <SmallStack $left={10} $top={4}>
          <SmallButton $gap={10}><InsertIcon /><SmallLabel $pull={6}>Insert</SmallLabel><Caret /></SmallButton>
          <SmallButton $gap={10}><DeleteIcon /><SmallLabel $pull={6}>Delete</SmallLabel><Caret /></SmallButton>
          <SmallButton $gap={5}><FormatIcon /><SmallLabel $pull={0}>Format</SmallLabel><Caret /></SmallButton>
        </SmallStack>
      </GroupBody>
      <GroupEnd name="Cells" launcher={false} />
    </Group>

    <Group $w={148}>
      <GroupBody $row>
        <SmallStack $left={11} $top={4} $w={47}>
          <SmallButton $gap={11}><SumIcon /><Caret /></SmallButton>
          <SmallButton $gap={3}><FillDownIcon /><Caret /></SmallButton>
          <SmallButton $gap={5}><EraserIcon /><Caret /></SmallButton>
        </SmallStack>
        <BigButton $w={50}>
          <BigIcon><SortIcon /></BigIcon>
          <ButtonLine>Sort &amp;</ButtonLine><ButtonLine>Filter<Caret /></ButtonLine>
        </BigButton>
        <BigButton $w={44}>
          <BigIcon><FindIcon /></BigIcon>
          <ButtonLine>Find &amp;</ButtonLine><ButtonLine>Select<Caret /></ButtonLine>
        </BigButton>
      </GroupBody>
      <GroupEnd name="Editing" launcher={false} />
    </Group>

    <Group $w={102}>
      <GroupBody $row>
        <BigButton $w={54}><BigIcon><BoxShareIcon /></BigIcon><ButtonLine>Share</ButtonLine></BigButton>
        <BigButton $w={40}><BigIcon><BoxUploadIcon /></BigIcon><ButtonLine>Upload</ButtonLine></BigButton>
      </GroupBody>
      <GroupEnd name="Box" launcher={false} />
    </Group>
    <RibbonEnd>
      <svg width="9" height="6" viewBox="0 0 9 6" fill="none" stroke="#555" strokeWidth="1.500"><path d="M.5 5 4.500 1l4 4" /></svg>
    </RibbonEnd>
  </Ribbon>
);

const PastedPicture = () => (
  <Picture>
    <PicHeader>
      <Corner $w={24} $pad="0 3px 4px 0"><Tri d="M8 0v8H0z" c="#b3b3b3" w={11} h={10} /></Corner>
      {picCols.map(([l, , w]) => <PicLetter key={l} $w={w}>{l}</PicLetter>)}
      <PicLetter $w={62}>G</PicLetter>
    </PicHeader>
    <PicRow>
      <PicNumber>1</PicNumber>
      {picCols.map(([l, n, w, indent]) => (
        <PicField key={l} $w={w} $indent={indent}>
          <span>{n}</span><FilterButton $size={14}><Caret c="#666" s={7} /></FilterButton>
        </PicField>
      ))}
      <PicBlank />
    </PicRow>
    {picRows.map(([date, day, id, biz, amt, com], i) => {
      const band = i % 2 === 0;
      return (
        <PicRow key={i}>
          <PicNumber $on={i === 8}>{i + 2}</PicNumber>
          <PicCell $w={82} $band={band} $right>{date}</PicCell>
          <PicCell $w={88} $band={band}>{day}</PicCell>
          <PicCell $w={72} $band={band} $right>{id}</PicCell>
          <PicCell $w={115} $band={band}>{biz}</PicCell>
          <PicCell $w={82} $band={band} $money><span>$</span><span>{amt}</span></PicCell>
          <PicCell $w={100} $band={band} $money><span>$</span><span>{com}</span></PicCell>
          <PicBlank />
        </PicRow>
      );
    })}
    <RedFrame />
  </Picture>
);

const App = () => (
  <>
    <Global />
    <Screen>
      <TitleBar>
        <QuickAccess>
          <QuickIcon $w={46}>
            <svg width="13" height="13" viewBox="0 0 13 13" fill="none" stroke="#e9f7ec" strokeWidth="1.700"><path d="M1 1h11v11H1zM3 1v4.500h7V1M4.500 12V9h4v3" /></svg>
          </QuickIcon>
          <QuickIcon $w={47}>
            <svg width="14" height="14" viewBox="0 0 14 14" fill="none" stroke="#e9f7ec" strokeWidth="2"><path d="M5.500.8 1.500 4.500l4 3.700M2 4.500h6c6 0 6 5.500 1 8.500" /></svg>
          </QuickIcon>
          <QuickIcon $w={49}>
            <svg width="14" height="14" viewBox="0 0 14 14" fill="none" stroke="#4f9c69" strokeWidth="1.500"><path d="M8.500.8l4 3.700-4 3.700M12 4.500H6C0 4.500 0 10 4 13" /></svg>
          </QuickIcon>
          <svg width="6" height="6" viewBox="0 0 6 6" fill="#d5ecdb"><path d="M1 0h4v1H1zM.5 2.200h5L3 5z" /></svg>
        </QuickAccess>
        <DocTitle>June Sales.xlsx  -  Excel</DocTitle>
        <ContextTitle>Table Tools</ContextTitle>
        <UserName>AbuZayda, Ihab</UserName>
        <WindowIcons>
          <WindowIcon $w={39}><svg width="13" height="11" viewBox="0 0 13 11" fill="none" stroke="#e9f7ec"><path d="M.5.500h12v10H.5zM.5 2.500h12M6.500 9V4.500M4.500 6.500l2-2 2 2" /></svg></WindowIcon>
          <WindowIcon $w={39}><svg width="11" height="2" viewBox="0 0 11 2"><path d="M0 1h11" stroke="#e9f7ec" /></svg></WindowIcon>
          <WindowIcon $w={38}><svg width="10" height="10" viewBox="0 0 10 10" fill="none" stroke="#e9f7ec"><path d="M.5 2.500h7v7h-7zM2.500 2.500v-2h7v7h-2" /></svg></WindowIcon>
          <svg width="10" height="10" viewBox="0 0 10 10" stroke="#e9f7ec" strokeWidth="1.200"><path d="m0 0 10 10M10 0 0 10" /></svg>
        </WindowIcons>
      </TitleBar>
      <TabBar>
        {tabs.map(([n, w, k]) => <RibbonTab key={n} $w={w} $kind={k}>{n}</RibbonTab>)}
        <TellMe>
          <svg width="12" height="17" viewBox="0 0 12 17" fill="none" stroke="#e9f7ec" strokeWidth="1.300"><path d="M4 12.500c0-3-3-3.500-3-7a5 5 0 0 1 10 0c0 3.500-3 4-3 7zM4 12.500V15h4v-2.500" /></svg>
          Tell me what you want to do
        </TellMe>
        <ShareLink>
          <svg width="14" height="14" viewBox="0 0 14 14" fill="none" stroke="#e9f7ec" strokeWidth="1.300"><circle cx="5.500" cy="4" r="3.400" /><path d="M.7 13.500c0-4 2-6 4.800-6M10.500 7v6.500M7.200 10.300h6.600" /></svg>
          Share
        </ShareLink>
      </TabBar>
      <RibbonPanel />
      <FormulaBar>
        <NameBox>F2<Caret s={7} /></NameBox>
        <BarDots><Dots /></BarDots>
        <FormulaTools>
          <svg width="11" height="10" viewBox="0 0 11 10" stroke="#b5b5b5" strokeWidth="1.400"><path d="m.5.500 10 9M10.500.500l-10 9" /></svg>
          <svg width="12" height="10" viewBox="0 0 12 10" fill="none" stroke="#aaa" strokeWidth="1.900"><path d="m.5 5.500 3.500 3.500L11.500.500" /></svg>
          <FxLabel>fx</FxLabel>
        </FormulaTools>
        <FormulaInput>
          <svg width="9" height="6" viewBox="0 0 9 6" fill="none" stroke="#555" strokeWidth="1.800"><path d="M.5.800 4.500 4.800l4-4" /></svg>
        </FormulaInput>
      </FormulaBar>

      <Workspace>
        <Sheet>
          <HeaderRow>
            <Corner $w={29} $pad="0 3px 2px 0"><Tri d="M8 0v8H0z" c="#b3b3b3" w={16} h={16} /></Corner>
            {fields.map(([n, w]) => (
              <FieldHeader key={n} $w={w} $selected={n === 'Commission'}>
                <span>{n}</span><FilterButton $size={16}><Caret c="#777" s={6} /></FilterButton>
              </FieldHeader>
            ))}
            {letters.map(l => <LetterHeader key={l} $w={75}>{l}</LetterHeader>)}
          </HeaderRow>
          <Rows>
            <RowStack>
              {mainRows.map(([n, day, id, biz, amt]) => {
                const band = n % 2 === 0;
                return (
                  <Row key={n}>
                    <RowNumber>{n}</RowNumber>
                    <Cell $w={104} $band={band}>{day}</Cell>
                    <Cell $w={86} $band={band} $right>{id}</Cell>
                    <Cell $w={138} $band={band}>{biz}</Cell>
                    <Cell $w={98} $band={band} $money><span>$</span><span>{amt}</span></Cell>
                    <Cell $w={109} $band={band} />
                    {letters.map(l => <BlankCell key={l} $w={75} />)}
                    <BlankCell $w={30} />
                  </Row>
                );
              })}
              <Row><RowNumber /></Row>
            </RowStack>
          </Rows>
          <PastedPicture />
          <Pointer>
            <svg width="22" height="30" viewBox="0 0 22 30">
              <path d="M8.500 0l3 3.500h-2V7h-2V3.500h-2zM0 8.500l3.500-3v2H7v2H3.500v2zM17 8.500l-3.500-3v2H10v2h3.500v2z" fill="#111" />
              <path d="M8.500 8.500v16.500l4-3.500 2.500 6 3-1.500-2.700-5.500h5z" fill="#fff" stroke="#444" strokeWidth=".8" />
            </svg>
          </Pointer>
        </Sheet>
        <VScroll>
          <ScrollButton><Tri d="M4 2l4 4.500H0z" c="#777" /></ScrollButton>
          <VThumb />
          <ScrollButton><Tri d="M0 2h8L4 6.500z" c="#777" w={7} /></ScrollButton>
        </VScroll>
      </Workspace>

      <SheetBar>
        <TabArrows>
          <Tri d="M6 0v8L0 4z" c="#b8b8b8" w={6} h={7} /><Tri d="M1 0v8l6-4z" c="#b8b8b8" w={6} h={7} />
        </TabArrows>
        <SheetTab $w={112}>Documentation</SheetTab>
        <SheetTab $w={90}>Sales Data 1</SheetTab>
        <SheetTab $w={90}>Sales Data 2</SheetTab>
        <SheetTab $w={90}>Sales Data 3</SheetTab>
        <SheetTab $w={90}>Sales Data 4</SheetTab>
        <SheetTab $w={90} $active>Sales Data 5</SheetTab>
        <AddSheet>
          <svg width="16" height="16" viewBox="0 0 16 16" fill="none" stroke="#777"><circle cx="8" cy="8" r="7.500" /><path d="M8 4v8M4 8h8" strokeWidth="1.500" /></svg>
        </AddSheet>
        <TabSplitter><Dots /></TabSplitter>
        <HScroll>
          <ScrollButton><Tri d="M6 0v8L2 4z" /></ScrollButton>
          <HThumb />
          <ScrollButton><Tri d="M2 0v8l4-4z" /></ScrollButton>
        </HScroll>
      </SheetBar>

      <StatusBar>
        <StatusText>Ready</StatusText>
        <ViewButton $on><svg width="17" height="17" viewBox="0 0 17 17" fill="none" stroke="#888"><path d="M.5.500h16v16H.5zM6 .5v16M11.500.500v16M.5 6h16M.5 11.500h16" /></svg></ViewButton>
        <ViewButton><svg width="17" height="17" viewBox="0 0 17 17" fill="none" stroke="#888"><path d="M.5.500h16v16H.5zM3.500 3.500h10v10h-10zM5.500 6h6M5.500 8.500h6M5.500 11h6" /></svg></ViewButton>
        <ViewButton><svg width="17" height="17" viewBox="0 0 17 17" fill="none" stroke="#999"><path d="M.5.500h16v16H.5zM.5 10.500h10v-10M5.500.500v10" /></svg></ViewButton>
        <Zoom>
          <svg width="122" height="16" viewBox="0 0 122 16">
            <path d="M0 3h6M113 3h8M117-1v8" stroke="#555" strokeWidth="1.600" />
            <path d="M11 8.500h61" stroke="#b5b5b5" />
            <rect x="59" y="2.500" width="5" height="11" fill="#6a6a6a" />
          </svg>
        </Zoom>
        <RecorderPill>
          <svg width="10" height="12" viewBox="0 0 10 12" fill="#d5d5d5"><rect x="1" y="0" width="2.500" height="11" /><rect x="6" y="0" width="2.500" height="11" /></svg>
          <svg width="15" height="16" viewBox="0 0 15 16" fill="none" stroke="#c4c4c4" strokeWidth="1.300"><circle cx="7" cy="7" r="4.700" /><circle cx="7" cy="7" r="1.700" /><path d="M3 14.500h8M14.500.500 1 14" /></svg>
        </RecorderPill>
        <ZoomValue>110%</ZoomValue>
      </StatusBar>
    </Screen>
  </>
);

export default App;
